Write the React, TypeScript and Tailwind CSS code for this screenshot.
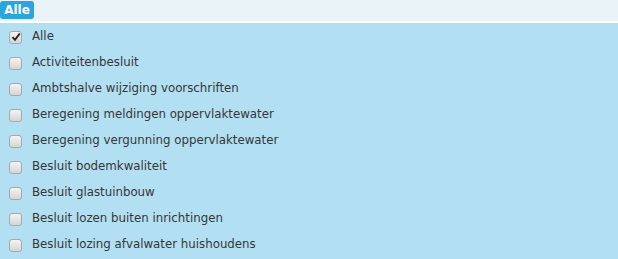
import React from "react";

const items = [
  { label: "Alle", checked: true },
  { label: "Activiteitenbesluit" },
  { label: "Ambtshalve wijziging voorschriften" },
  { label: "Beregening meldingen oppervlaktewater" },
  { label: "Beregening vergunning oppervlaktewater" },
  { label: "Besluit bodemkwaliteit" },
  { label: "Besluit glastuinbouw" },
  { label: "Besluit lozen buiten inrichtingen" },
  { label: "Besluit lozing afvalwater huishoudens" },
];

function Box({ checked }: { checked?: boolean }) {
  return (
    <div className="w-[13px] h-[13px] rounded-[3px] border border-[#a8a8a8] bg-gradient-to-b from-[#f4f4f4] to-[#d6d6d6] flex items-center justify-center shrink-0">
      {checked && (
        <svg width="10" height="10" viewBox="0 0 10 10">
          <path d="M1.5 5.2 L4 7.8 L8.8 1.5" fill="none" stroke="#222" strokeWidth="1.9" />
        </svg>
      )}
    </div>
  );
}

export default function App() {
  return (
    <div className="w-[618px] h-[259px] overflow-hidden bg-[#b3dff2] font-['DejaVu_Sans',sans-serif]">
      <div className="h-[21px] bg-[#eaf3f7] flex items-start pt-[1px]">
        <div className="h-[18px] w-[34px] justify-center rounded-[3px] bg-[#2aa6de] text-white text-[12px] font-bold flex items-center leading-none">
          Alle
        </div>
      </div>
      <div className="h-[2px] bg-white" />
      <div className="pt-[1px]">
        {items.map((it) => (
          <div key={it.label} className="h-[26px] flex items-center pl-[9px] gap-[10px]">
            <Box checked={it.checked} />
            <span className="text-[11.8px] text-[#363636]">{it.label}</span>
          </div>
        ))}
      </div>
    </div>
  );
}
